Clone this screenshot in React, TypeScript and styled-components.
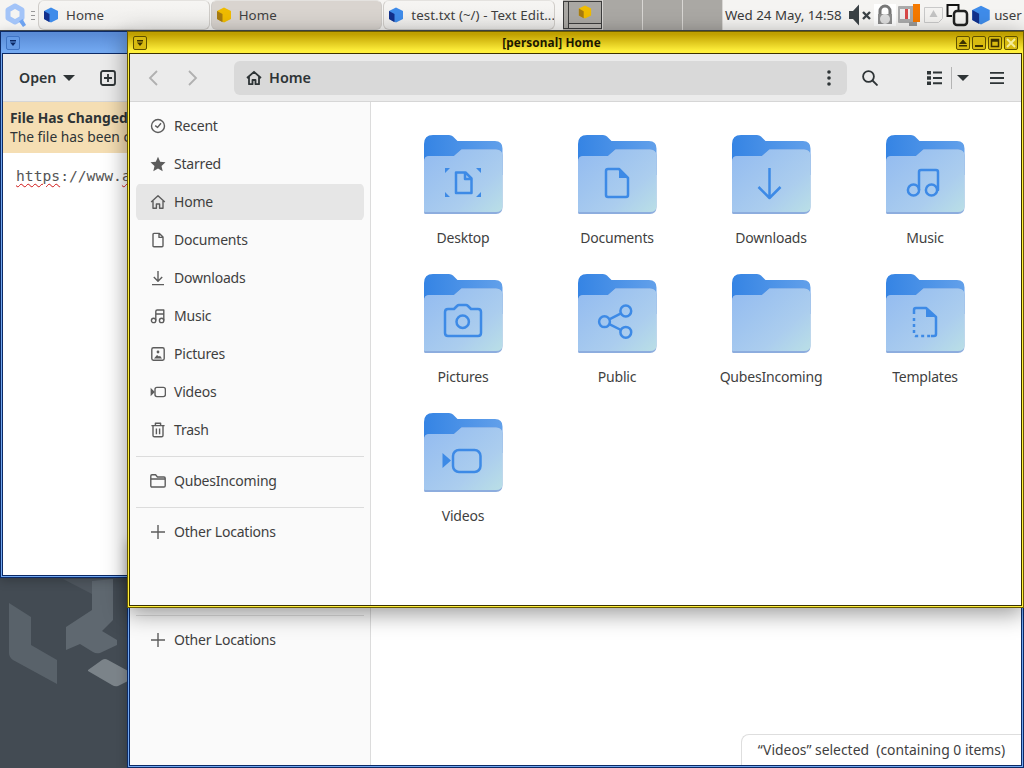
import styled, { createGlobalStyle } from 'styled-components'
import type { ReactNode } from 'react'

const GlobalStyle = createGlobalStyle`
    html, body {
        margin: 0;
        padding: 0;
        background: #434b53;
    }
    * {
        box-sizing: border-box;
    }
    svg {
        flex: none;
    }
`

const FONT = `"Noto Sans", "Open Sans", sans-serif`

const tones = {
    blue: { edge: '#0c2a66', outer: '#0c2a66', top: '#5a8cd6', bottom: '#72a8f0', btn: '#3f74c4', btnBg: '#659be6' },
    yellow: { edge: '#3c3200', outer: '#6a5a00', top: '#c0a000', bottom: '#fff03c', btn: '#5e5000', btnBg: '#d8bb10' },
}

type Tone = keyof typeof tones

const Cube = ({ tone, size = 16 }: { tone: Tone; size?: number }) => {
    const main = tone === 'blue' ? '#3f8cea' : '#f0bc00'
    const dark = tone === 'blue' ? '#12308c' : '#a87c10'
    return (
        <svg width={size} height={size} viewBox="0 0 16 16">
            <path d="M8 .5 15 4v8l-7 3.5L1 12V4z" fill={main} />
            <path d="M1 4l5.5 3v8.2L1 12z" fill={dark} />
        </svg>
    )
}

const SideIcons: Record<string, ReactNode> = {
    Recent: (
        <>
            <circle cx="8" cy="8" r="6.5" />
            <path d="M5.2 7.6 7.6 9.4 11 5.2" />
        </>
    ),
    Starred: <path d="M8 .8l2.2 5 5.3.5-4 3.6 1.2 5.3L8 12.4l-4.7 2.8 1.2-5.3-4-3.6 5.3-.5z" fill="#5c5c5c" stroke="none" />,
    Home: <path d="M1.2 8 8 1.8 14.8 8M3 7v7.2h3.4V10h3.2v4.2H13V7" />,
    Documents: <path d="M3 2.4q0-1 1-1h5.4L13 5v8.7q0 1-1 1H4q-1 0-1-1zM9 1.6V5.4h3.8" />,
    Downloads: <path d="M8 1v10M3.8 7 8 11.2 12.2 7M2 14.6h12" />,
    Music: (
        <>
            <circle cx="3.6" cy="12.4" r="2.2" />
            <circle cx="11.6" cy="12.4" r="2.2" />
            <path d="M5.8 12.4V3.4q0-1.4 1.4-1.4h6.6v10.4M5.8 6h8" />
        </>
    ),
    Pictures: (
        <>
            <rect x="1.8" y="1.8" width="12.4" height="12.4" rx="1.6" />
            <circle cx="8" cy="6" r="1.4" fill="#5c5c5c" stroke="none" />
            <path d="M4 12.4 7 9l2 1.6 1-.8 2 2.6z" fill="#5c5c5c" stroke="none" />
        </>
    ),
    Videos: (
        <>
            <rect x="5" y="3.4" width="10.4" height="9.2" rx="2" />
            <path d="M.6 3.8 4.8 8 .6 12.2z" fill="#5c5c5c" stroke="none" />
        </>
    ),
    Trash: <path d="M1.4 3.6h13.2M5.4 3.4V1.2h5.2v2.2M3 3.8v9.6q0 1.4 1.4 1.4h7.2q1.4 0 1.4-1.4V3.8M6.4 6.6v5.6M9.6 6.6v5.6" />,
    QubesIncoming: <path d="M.8 3q0-1.2 1.2-1.2h3.6L7.4 4H14q1.2 0 1.2 1.2v7.6q0 1.2-1.2 1.2H2q-1.2 0-1.2-1.2zM1 6h14" />,
    'Other Locations': <path d="M8 1v14M1 8h14" />,
}

const FolderGlyphs: Record<string, ReactNode> = {
    Desktop: (
        <>
            <path d="M32 37.5h9.5l6 6V58H32z" />
            <path d="M41 37v7h6.5" />
            <path d="M21 33h5l-5 5zM57 33h-5l5 5zM21 62h5l-5-5zM57 62h-5l5-5z" fill="#3d8ae6" stroke="none" />
        </>
    ),
    Documents: (
        <>
            <path d="M28 36q0-2 2-2h11l9 9v17q0 2-2 2H30q-2 0-2-2z" />
            <path d="M41 34l9 9h-9z" fill="#3d8ae6" stroke="none" />
        </>
    ),
    Downloads: <path d="M37.5 33v30M26.5 52l11 11 11-11" />,
    Music: (
        <>
            <circle cx="27.5" cy="55" r="5.6" />
            <circle cx="45.5" cy="55" r="5.6" />
            <path d="M33 55V37q0-2 2-2h15q2 0 2 2v18h-1" />
        </>
    ),
    Pictures: (
        <>
            <path d="M24 35h6l3-3q1-1 2-1h7q1 0 2 1l3 3h7q3 0 3 3v21q0 3-3 3H24q-3 0-3-3V38q0-3 3-3z" />
            <circle cx="38.7" cy="47.7" r="6.2" />
        </>
    ),
    Public: (
        <>
            <circle cx="26.5" cy="47.7" r="5.4" />
            <circle cx="47.8" cy="37" r="5.4" />
            <circle cx="47.8" cy="58.3" r="5.4" />
            <path d="M31.3 45.3 43 39.4M31.3 50.1 43 56" />
        </>
    ),
    Templates: (
        <>
            <path d="M28 40v-4q0-2 2-2h10l10 9v17q0 2-2 2h-3" />
            <path d="M28 44v16q0 2 2 2h16" strokeDasharray="3 3" />
            <path d="M40 34l10 9h-10z" fill="#3d8ae6" stroke="none" />
        </>
    ),
    Videos: (
        <>
            <rect x="29" y="37" width="27.5" height="22" rx="6" />
            <path d="M18.5 40 27 47.5 18.5 55z" fill="#3d8ae6" stroke="none" />
        </>
    ),
}

const Folder = ({ name }: { name: string }) => (
    <svg width="79" height="80" viewBox="0 0 79 80">
        <defs>
            <linearGradient id="back" x1="0" y1="0" x2="1" y2="0">
                <stop offset="0" stopColor="#3584e4" />
                <stop offset="1" stopColor="#62a0ea" />
            </linearGradient>
            <linearGradient id="front" x1="0" y1="0.1" x2="1" y2="1">
                <stop offset="0" stopColor="#94bcf0" />
                <stop offset="0.65" stopColor="#abcdee" />
                <stop offset="1" stopColor="#badfe6" />
            </linearGradient>
        </defs>
        <path d="M0 9Q0 0 9 0H25Q27.500 0 29 1.500L33.500 6H71Q78.500 6 78.500 13.500V40H0Z" fill="url(#back)" />
        <path d="M0 27Q0 21 5 21H30L37.500 14.500H72Q78.500 14.500 78.500 21V72Q78.500 79 72 79H1Q0 79 0 77Z" fill="#8dadde" />
        <path d="M0 27Q0 21 5 21H30L37.500 14.500H72Q78.500 14.500 78.500 21V71Q78.500 77 72 77H1Q0 77 0 76Z" fill="url(#front)" />
        <g fill="none" stroke="#3d8ae6" strokeWidth="2.500" strokeLinejoin="round">
            {FolderGlyphs[name]}
        </g>
    </svg>
)

const WallpaperLogo = () => (
    <LogoSvg width="130" height="120" viewBox="0 0 130 120">
        <path d="M63 1H113L92 16z" fill="#4f575f" />
        <path d="M92 3 113 1V42L102 53 117 62V67L100 75Q96 76 93 74L80 66 66 72V49L92 32z" fill="#5f6870" />
        <path d="M9 25 31 39V67L57 82V106L13 82Q9 79 9 75z" fill="#59626a" />
        <path d="M88 92 102 82Q105 80 108 82L130 94V102L118 108Q115 109 112 107L88 93z" fill="#7b8389" />
    </LogoSvg>
)

const QLogo = () => (
    <svg width="24" height="26" viewBox="0 0 24 26">
        <path d="M12 4 19 8V16L12 20 5 16V8z" fill="none" stroke="#a3c4f8" strokeWidth="5" strokeLinejoin="round" />
        <path d="M16 19.500l3.500-2.500 3.500 6-3 2z" fill="#6ea4f2" />
    </svg>
)

const Tray = () => (
    <TrayRow>
        <svg width="24" height="24" viewBox="0 0 24 24">
            <path d="M1 8h4l6-6.500v21L5 16H1z" fill="#3b4246" />
            <path d="M15 9l7 7M22 9l-7 7" stroke="#3b4246" strokeWidth="2.400" />
        </svg>
        <svg width="22" height="22" viewBox="0 0 22 22">
            <rect width="22" height="22" fill="#fff" />
            <path d="M6 10V7a5 5 0 0 1 10 0v3" fill="none" stroke="#777" strokeWidth="3" />
            <path d="M4 10h14v10H4z" fill="#8c8c8c" />
            <circle cx="11" cy="15" r="5" fill="#ddd" />
        </svg>
        <svg width="22" height="24" viewBox="0 0 22 24">
            <rect x="0" y="3" width="16" height="17" rx="1" fill="#aaa" />
            <rect x="2" y="6" width="10" height="10" fill="#eee" />
            <rect x="7" y="6" width="3" height="10" fill="#d84848" />
            <rect x="15" y="1" width="7" height="18" fill="#f57900" />
            <rect x="11" y="19" width="8" height="4" fill="#999" />
        </svg>
        <svg width="21" height="20" viewBox="0 0 21 20">
            <path d="M1.500 2.500h18v11l-4 4h-14z" fill="#f4f3f1" stroke="#c9c9c9" />
            <path d="M10.500 5l4 7h-8z" fill="#c4c4c4" />
        </svg>
        <svg width="23" height="24" viewBox="0 0 23 24">
            <path d="M6 13H1.500V2h11v5" fill="none" stroke="#111" strokeWidth="2" />
            <rect x="8" y="8" width="13" height="14" rx="3" fill="none" stroke="#222" strokeWidth="2.500" />
        </svg>
        <Cube tone="blue" size={20} />
        <UserName>user</UserName>
    </TrayRow>
)

const TitleBtn = ({ tone, kind }: { tone: Tone; kind: string }) => (
    <TitleButton $tone={tone}>
        <svg width="10" height="10" viewBox="0 0 10 10">
            {kind === 'menu' && <path d="M2 2h6v1.500H2zM2 4.500h6L5 8z" fill={tones[tone].edge} />}
            {kind === 'shade' && <path d="M5 1.500 9 6H1zM1 7h8v1.500H1z" fill={tones[tone].edge} />}
            {kind === 'min' && <path d="M1 7h8v2H1z" fill={tones[tone].edge} />}
            {kind === 'max' && <path d="M1.500 1.500h7v7h-7z M1.500 3h7" fill="none" stroke={tones[tone].edge} strokeWidth="1.500" />}
            {kind === 'close' && <path d="M1 1l8 8M9 1l-8 8" stroke="#f4ec9c" strokeWidth="2" />}
        </svg>
    </TitleButton>
)

const places = ['Recent', 'Starred', 'Home', 'Documents', 'Downloads', 'Music', 'Pictures', 'Videos', 'Trash']
const folders = ['Desktop', 'Documents', 'Downloads', 'Music', 'Pictures', 'Public', 'QubesIncoming', 'Templates', 'Videos']

const Place = ({ name, active }: { name: string; active?: boolean }) => (
    <SideRow $active={active}>
        <svg width="16" height="16" viewBox="0 0 16 16" fill="none" stroke="#5c5c5c" strokeWidth="1.400" strokeLinejoin="round">
            {SideIcons[name]}
        </svg>
        <span>{name}</span>
    </SideRow>
)

export default function App() {
    return (
        <Screen>
            <GlobalStyle />
            <Panel>
                <MenuButton>
                    <QLogo />
                    <Grip />
                </MenuButton>
                <TaskList>
                    <Task>
                        <Cube tone="blue" />
                        <span>Home</span>
                    </Task>
                    <Task $active>
                        <Cube tone="yellow" />
                        <span>Home</span>
                    </Task>
                    <Task>
                        <Cube tone="blue" />
                        <span>test.txt (~/) - Text Edit...</span>
                    </Task>
                </TaskList>
                <Pager>
                    <PagerCell $current>
                        <MiniBack />
                        <MiniFront>
                            <Cube tone="yellow" size={14} />
                        </MiniFront>
                    </PagerCell>
                    <PagerCell />
                    <PagerCell />
                    <PagerCell />
                </Pager>
                <Clock>Wed 24 May, 14:58</Clock>
                <Tray />
            </Panel>

            <Desktop>
                <WallpaperLogo />

                <Win $tone="blue" $left={0} $top={1} $width={133} $height={547}>
                    <TitleBar $tone="blue">
                        <TitleBtn tone="blue" kind="menu" />
                    </TitleBar>
                    <Content $tone="blue">
                        <HeaderBar>
                            <OpenButton>
                                Open
                                <svg width="12" height="6" viewBox="0 0 12 6">
                                    <path d="M0 0h12L6 6z" fill="#2e3436" />
                                </svg>
                            </OpenButton>
                            <svg width="16" height="16" viewBox="0 0 16 16" fill="none" stroke="#2e3436" strokeWidth="1.800">
                                <rect x="1" y="1" width="14" height="14" rx="2" />
                                <path d="M8 4v8M4 8h8" />
                            </svg>
                        </HeaderBar>
                        <InfoBar>
                            <strong>File Has Changed</strong>
                            <span>The file has been c</span>
                        </InfoBar>
                        <EditorText>
                            <Misspelt>https</Misspelt>://www.<Misspelt>a</Misspelt>
                        </EditorText>
                    </Content>
                </Win>

                <Win $tone="blue" $left={127} $top={510} $width={897} $height={228}>
                    <TitleBar $tone="blue" />
                    <Content $tone="blue">
                        <Body>
                            <Sidebar $pad={45}>
                                <SideRule />
                                <Place name="Other Locations" />
                            </Sidebar>
                            <Main />
                        </Body>
                        <StatusFloat>“Videos” selected&nbsp; (containing 0 items)</StatusFloat>
                    </Content>
                </Win>

                <Win $tone="yellow" $left={127} $top={1} $width={897} $height={577} $raised>
                    <TitleBar $tone="yellow">
                        <TitleBtn tone="yellow" kind="menu" />
                        <TitleText>[personal] Home</TitleText>
                        <TitleBtnGroup>
                            <TitleBtn tone="yellow" kind="shade" />
                            <TitleBtn tone="yellow" kind="min" />
                            <TitleBtn tone="yellow" kind="max" />
                            <TitleBtn tone="yellow" kind="close" />
                        </TitleBtnGroup>
                    </TitleBar>
                    <Content $tone="yellow">
                        <HeaderBar $files>
                            <NavButton>
                                <svg width="10" height="16" viewBox="0 0 10 16" fill="none" stroke="#b0b0b0" strokeWidth="1.800">
                                    <path d="M9 1 2 8l7 7" />
                                </svg>
                            </NavButton>
                            <NavButton>
                                <svg width="10" height="16" viewBox="0 0 10 16" fill="none" stroke="#b0b0b0" strokeWidth="1.800">
                                    <path d="M1 1l7 7-7 7" />
                                </svg>
                            </NavButton>
                            <PathBar>
                                <PathLabel>
                                    <svg width="16" height="16" viewBox="0 0 16 16" fill="none" stroke="#2e3436" strokeWidth="1.800" strokeLinejoin="round">
                                        <path d="M1 8 8 1.800 15 8M3 6.500v7.700h3.500V10h3v4.200H13V6.500" />
                                    </svg>
                                    <span>Home</span>
                                </PathLabel>
                                <svg width="4" height="16" viewBox="0 0 4 16" fill="#2e3436">
                                    <circle cx="2" cy="2" r="1.800" />
                                    <circle cx="2" cy="8" r="1.800" />
                                    <circle cx="2" cy="14" r="1.800" />
                                </svg>
                            </PathBar>
                            <SearchSlot>
                                <svg width="16" height="16" viewBox="0 0 16 16" fill="none" stroke="#2e3436" strokeWidth="1.800">
                                    <circle cx="6.500" cy="6.500" r="5.400" />
                                    <path d="M10.500 10.500 15.500 15.500" />
                                </svg>
                            </SearchSlot>
                            <ViewSwitch>
                                <svg width="15" height="14" viewBox="0 0 15 14" fill="#2e3436">
                                    <path d="M0 0h4v3.400H0zM6 .6h9v2H6zM0 5.300h4v3.400H0zM6 6h9v2H6zM0 10.600h4V14H0zM6 11.300h9v2H6z" />
                                </svg>
                                <ViewRule />
                                <svg width="12" height="6" viewBox="0 0 12 6">
                                    <path d="M0 0h12L6 6z" fill="#2e3436" />
                                </svg>
                            </ViewSwitch>
                            <svg width="14" height="12" viewBox="0 0 14 12" fill="#2e3436">
                                <path d="M0 0h14v1.800H0zM0 5.100h14v1.800H0zM0 10.200h14V12H0z" />
                            </svg>
                        </HeaderBar>
                        <Body>
                            <Sidebar $pad={5}>
                                {places.map(name => (
                                    <Place key={name} name={name} active={name === 'Home'} />
                                ))}
                                <SideRule />
                                <Place name="QubesIncoming" />
                                <SideRule />
                                <Place name="Other Locations" />
                            </Sidebar>
                            <Main>
                                <FolderGrid>
                                    {folders.map(name => (
                                        <FolderCell key={name}>
                                            <Folder name={name} />
                                            <span>{name}</span>
                                        </FolderCell>
                                    ))}
                                </FolderGrid>
                            </Main>
                        </Body>
                    </Content>
                </Win>
            </Desktop>
        </Screen>
    )
}

const Screen = styled.div`
    width: 1024px;
    height: 768px;
    overflow: hidden;
    display: flex;
    flex-direction: column;
    font-family: ${FONT};
    color: #3d3d3d;
`

const Panel = styled.div`
    height: 30px;
    flex: none;
    display: flex;
    align-items: stretch;
    background: #f5f4f2;
    font-size: 13.3px;
`

const MenuButton = styled.div`
    width: 38px;
    flex: none;
    padding-left: 3px;
    display: flex;
    align-items: center;
    gap: 4px;
`

const Grip = styled.div`
    width: 4px;
    height: 9px;
    border-top: 1px solid #999;
    border-bottom: 1px solid #999;
    background: linear-gradient(#999, #999) center / 100% 1px no-repeat;
`

const TaskList = styled.div`
    display: flex;
    gap: 1px;
    width: 517px;
    flex: none;
`

const Task = styled.div<{ $active?: boolean }>`
    flex: 1 1 0;
    min-width: 0;
    padding: 0 0 0 4px;
    display: flex;
    align-items: center;
    gap: 7px;
    white-space: nowrap;
    overflow: hidden;
    letter-spacing: 0.05px;
    color: #3f3f3f;
    border: 1px solid #cfccc8;
    border-top-color: #e4e2df;
    border-radius: 6px;
    background: ${p => (p.$active ? '#d9d4cf' : 'linear-gradient(#f6f5f3, #eeedeb)')};
`

const Pager = styled.div`
    margin-left: 8px;
    width: 160px;
    flex: none;
    display: flex;
`

const PagerCell = styled.div<{ $current?: boolean }>`
    flex: 1;
    position: relative;
    background: ${p => (p.$current ? '#bcb9b5' : '#aaa8a4')};
    border-right: 1px solid #d9d7d4;
`

const MiniBack = styled.div`
    position: absolute;
    left: 0;
    top: 1px;
    width: 8px;
    height: 28px;
    border: 1px solid #3c3c3c;
    background: #aaa8a4;
`

const MiniFront = styled.div`
    position: absolute;
    left: 5px;
    top: 1px;
    width: 34px;
    height: 28px;
    border: 1px solid #3c3c3c;
    background: linear-gradient(#aaa8a4 0 21px, #3c3c3c 21px 22px, #bcb9b5 22px);
    display: flex;
    justify-content: center;
    padding-top: 3px;
`

const Clock = styled.div`
    margin-left: 2px;
    width: 123px;
    flex: none;
    line-height: 30px;
    white-space: nowrap;
    color: #3a3a3a;
`

const TrayRow = styled.div`
    flex: 1;
    min-width: 0;
    display: flex;
    align-items: center;
    gap: 2.2px;
`

const UserName = styled.span`
    margin-left: 1px;
`

const Desktop = styled.div`
    position: relative;
    flex: 1;
    background: #434b53;
`

const LogoSvg = styled.svg`
    position: absolute;
    left: 0;
    top: 548px;
`

const Win = styled.div<{ $tone: Tone; $left: number; $top: number; $width: number; $height: number; $raised?: boolean }>`
    position: absolute;
    left: ${p => p.$left}px;
    top: ${p => p.$top}px;
    width: ${p => p.$width}px;
    height: ${p => p.$height}px;
    display: flex;
    flex-direction: column;
    padding: 0 1px 1px;
    border: 1px solid ${p => tones[p.$tone].outer};
    background: ${p => tones[p.$tone].bottom};
    box-shadow: ${p => (p.$raised ? '0 5px 22px rgba(0, 0, 0, 0.42)' : '0 2px 10px rgba(0, 0, 0, 0.25)')};
    overflow: ${p => (p.$raised ? 'visible' : 'hidden')};
`

const TitleBar = styled.div<{ $tone: Tone }>`
    height: 21px;
    flex: none;
    margin: 0 -1px;
    padding: 0 5px;
    display: flex;
    align-items: center;
    background: linear-gradient(${p => tones[p.$tone].top} 10%, ${p => tones[p.$tone].bottom} 90%);
`

const TitleButton = styled.div<{ $tone: Tone }>`
    width: 14px;
    height: 14px;
    flex: none;
    display: flex;
    align-items: center;
    justify-content: center;
    border: 1px solid ${p => tones[p.$tone].btn};
    border-radius: 2px;
    background: ${p => tones[p.$tone].btnBg};
`

const TitleText = styled.div`
    flex: 1;
    padding-bottom: 2px;
    text-align: center;
    font-size: 11.8px;
    font-weight: 700;
    letter-spacing: 0.1px;
    color: #1c1800;
`

const TitleBtnGroup = styled.div`
    display: flex;
    gap: 2px;
`

const Content = styled.div<{ $tone: Tone }>`
    position: relative;
    flex: 1;
    min-height: 0;
    display: flex;
    flex-direction: column;
    border: 1px solid ${p => tones[p.$tone].edge};
    background: #fff;
`

const HeaderBar = styled.div<{ $files?: boolean }>`
    height: 48px;
    flex: none;
    display: flex;
    align-items: center;
    padding: ${p => (p.$files ? '0 16px 0 16px' : '0 0 0 16px')};
    background: #ebebeb;
    border-bottom: 1px solid #d6d6d6;
    color: #2e3436;
`

const OpenButton = styled.div`
    display: flex;
    align-items: center;
    gap: 7px;
    width: 81px;
    padding-bottom: 1px;
    font-size: 14.2px;
    font-weight: 600;
    svg {
        margin-top: 1px;
    }
`

const NavButton = styled.div`
    width: 40px;
    flex: none;
    padding-left: 2px;
    display: flex;
`

const PathBar = styled.div`
    margin-left: 8px;
    width: 613px;
    height: 34px;
    flex: none;
    display: flex;
    align-items: center;
    justify-content: space-between;
    padding: 0 16px 0 12px;
    border-radius: 6px;
    background: #d9d9d9;
`

const PathLabel = styled.div`
    display: flex;
    align-items: center;
    gap: 7px;
    font-size: 14.4px;
    font-weight: 600;
    span {
        padding-bottom: 1px;
    }
`

const SearchSlot = styled.div`
    margin-left: 15px;
    width: 65px;
    flex: none;
    display: flex;
`

const ViewSwitch = styled.div`
    width: 63px;
    flex: none;
    display: flex;
    align-items: center;
`

const ViewRule = styled.div`
    margin: 0 5px 0 9px;
    width: 1px;
    height: 22px;
    background: #b4b4b4;
`

const InfoBar = styled.div`
    height: 51px;
    flex: none;
    padding: 6px 0 0 7px;
    display: flex;
    flex-direction: column;
    background: #f5deb3;
    color: #2e3436;
    font-size: 13.8px;
    line-height: 19px;
    white-space: nowrap;
`

const EditorText = styled.div`
    padding: 14px 0 0 13px;
    font-family: "DejaVu Sans Mono", monospace;
    font-size: 14.67px;
    color: #555;
    white-space: nowrap;
`

const Misspelt = styled.span`
    text-decoration: underline wavy #d01515 1px;
    text-underline-offset: 2px;
`

const Body = styled.div`
    flex: 1;
    min-height: 0;
    display: flex;
`

const Sidebar = styled.div<{ $pad: number }>`
    width: 241px;
    flex: none;
    padding: ${p => p.$pad}px 6px 0;
    background: #fafafa;
    border-right: 1px solid #dcdcdc;
`

const SideRow = styled.div<{ $active?: boolean }>`
    height: 38px;
    padding: 0 14px;
    display: flex;
    align-items: center;
    gap: 8px;
    font-size: 14px;
    letter-spacing: -0.2px;
    color: #3f3f3f;
    border-radius: 6px;
    background: ${p => (p.$active ? 'linear-gradient(transparent 1px, #e6e6e6 1px, #e6e6e6 37px, transparent 37px)' : 'transparent')};
    span {
        padding-bottom: 2px;
    }
`

const SideRule = styled.div`
    margin: 7px 0 5px;
    height: 1px;
    background: #dcdcdc;
`

const Main = styled.div`
    flex: 1;
    min-width: 0;
    background: #fff;
`

const FolderGrid = styled.div`
    padding: 33px 0 0 15px;
    display: grid;
    grid-template-columns: repeat(4, 154px);
    grid-auto-rows: 139px;
`

const FolderCell = styled.div`
    display: flex;
    flex-direction: column;
    align-items: center;
    font-size: 14px;
    letter-spacing: -0.2px;
    color: #3f3f3f;
    svg {
        display: block;
    }
    span {
        margin-top: 12px;
        line-height: 22px;
    }
`

const StatusFloat = styled.div`
    position: absolute;
    right: 0;
    bottom: 0;
    width: 280px;
    height: 31px;
    padding-bottom: 2px;
    display: flex;
    align-items: center;
    justify-content: center;
    font-size: 13.9px;
    white-space: nowrap;
    color: #3f3f3f;
    background: #fff;
    border: 1px solid #dedede;
    border-width: 1px 0 0 1px;
    border-top-left-radius: 8px;
`
